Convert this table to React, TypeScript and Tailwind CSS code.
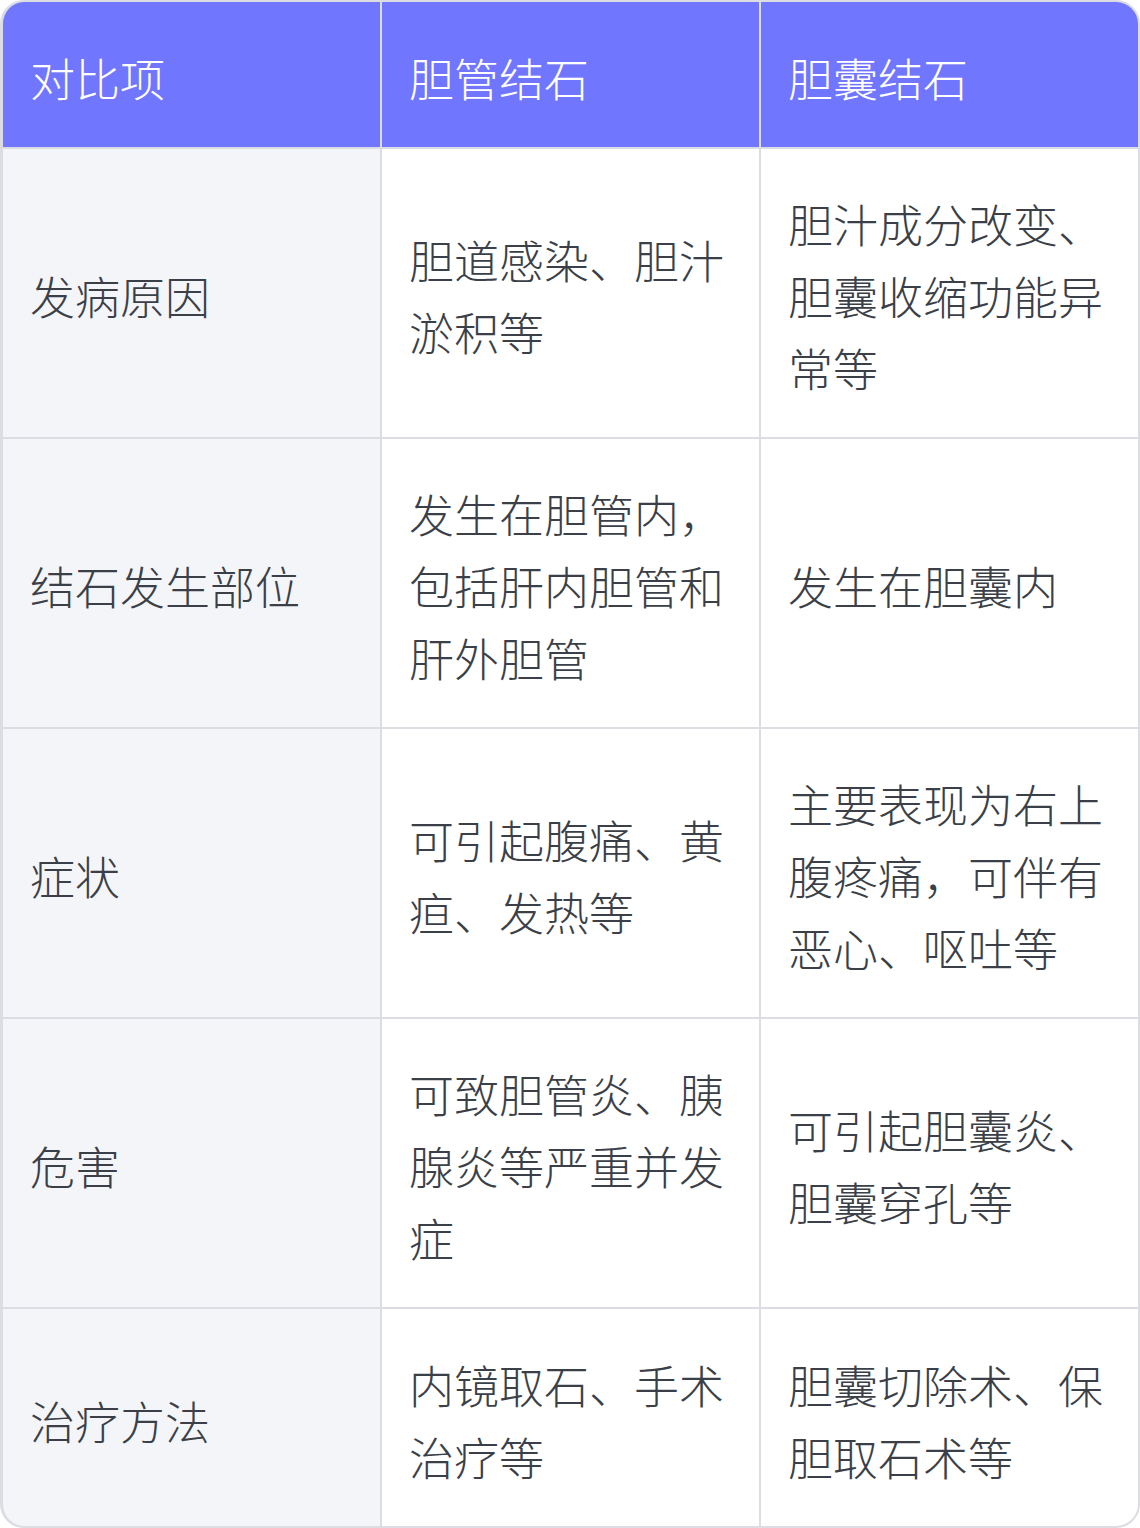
import React from "react";

const rows: [string, string, string][] = [
  ["发病原因", "胆道感染、胆汁淤积等", "胆汁成分改变、胆囊收缩功能异常等"],
  ["结石发生部位", "发生在胆管内，包括肝内胆管和肝外胆管", "发生在胆囊内"],
  ["症状", "可引起腹痛、黄疸、发热等", "主要表现为右上腹疼痛，可伴有恶心、呕吐等"],
  ["危害", "可致胆管炎、胰腺炎等严重并发症", "可引起胆囊炎、胆囊穿孔等"],
  ["治疗方法", "内镜取石、手术治疗等", "胆囊切除术、保胆取石术等"],
];

export default function App() {
  return (
    <div
      className="w-[1140px] h-[1528px] bg-white"
      style={{ fontFamily: '"Noto Sans CJK SC", "Noto Sans", sans-serif' }}
    >
      <div className="w-[1140px] rounded-3xl overflow-hidden border-t-2 border-b-2 border-r-2 border-l-[3px] border-[#dcdde2] bg-[#dcdde2]">
        <div className="grid grid-cols-[377px_377px_377px] gap-[2px]">
          {["对比项", "胆管结石", "胆囊结石"].map((h) => (
            <div
              key={h}
              className="bg-[#7176ff] text-white text-[45px] leading-[72px] px-[27px] pt-[40px] pb-[33px] font-light"
            >
              {h}
            </div>
          ))}
          {rows.map((r, i) => {
            const pad = i === rows.length - 1 ? "pt-[40px] pb-[33px]" : "pt-[39px] pb-[33px]";
            return (
              <React.Fragment key={i}>
                <div className={`bg-[#f4f5f9] text-[#3b3f48] text-[45px] leading-[72px] px-[27px] ${pad} flex items-center font-light`}>
                  <span>{r[0]}</span>
                </div>
                <div className={`bg-white text-[#3b3f48] text-[45px] leading-[72px] px-[27px] ${pad} flex items-center font-light`}>
                  <span>{r[1]}</span>
                </div>
                <div className={`bg-white text-[#3b3f48] text-[45px] leading-[72px] px-[27px] ${pad} flex items-center font-light`}>
                  <span>{r[2]}</span>
                </div>
              </React.Fragment>
            );
          })}
        </div>
      </div>
    </div>
  );
}
